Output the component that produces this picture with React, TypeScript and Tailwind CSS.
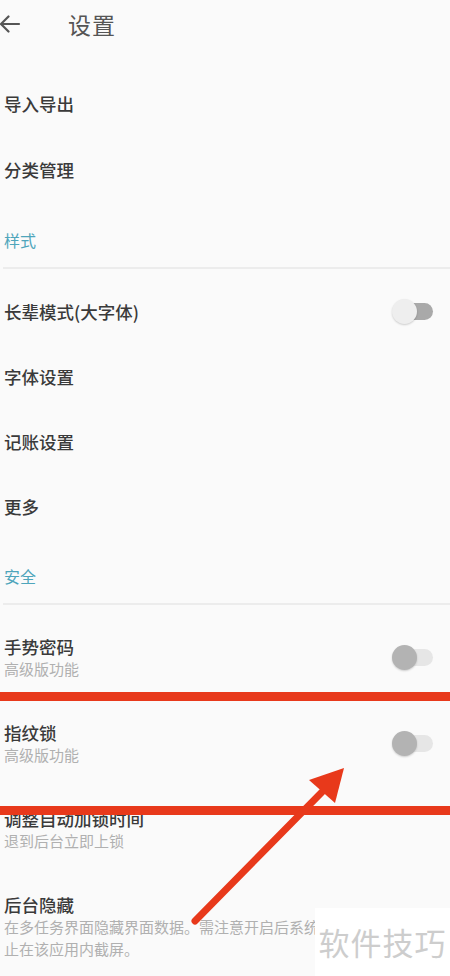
import type { ReactNode } from "react";

const font = { fontFamily: '"Noto Sans CJK SC", "Noto Sans", sans-serif' };

const Toggle = ({ on }: { on?: boolean }) => (
  <div className="relative w-[41px] h-[26px] shrink-0">
    <div
      className={`absolute left-[4px] right-0 top-[4px] h-[17px] rounded-full ${
        on ? "bg-[#a9a9a9]" : "bg-[#e6e6e6]"
      }`}
    />
    <div
      className={`absolute left-0 top-0 w-[25px] h-[25px] rounded-full shadow-[0_1px_2px_rgba(0,0,0,0.18)] ${
        on ? "bg-[#eeeeee]" : "bg-[#b3b3b3]"
      }`}
    />
  </div>
);

const Row = ({ title, toggle }: { title: string; toggle?: boolean }) => (
  <div className="h-[65px] flex items-center justify-between pl-[4px] pr-[17px]">
    <span className="text-[17.5px] leading-[22px] font-medium text-[#3a3a3a]">{title}</span>
    {toggle && <Toggle on />}
  </div>
);

const SubRow = ({
  title,
  sub,
  toggle,
}: {
  title: string;
  sub: ReactNode;
  toggle?: boolean;
}) => (
  <div className="flex items-center justify-between pl-[4px] pr-[17px] pt-[21px] pb-[21px]">
    <div className="flex flex-col w-[350px]">
      <span className="text-[17.5px] leading-[22px] font-medium text-[#3a3a3a]">{title}</span>
      <span className="text-[15px] leading-[22px] text-[#b0b0b0]">{sub}</span>
    </div>
    {toggle && <Toggle />}
  </div>
);

const Section = ({ label }: { label: string }) => (
  <div className="pl-[4px]">
    <div className="pt-[28px] text-[16px] leading-[18px] text-[#4ea5bb]">{label}</div>
    <div className="mt-[18px] mx-[-1px] h-[2px] bg-[#ececec]" />
  </div>
);

const App = () => {
  return (
    <div className="relative w-[450px] h-[976px] overflow-hidden bg-[#fafafa]" style={font}>
      {/* header */}
      <div className="h-[48px] flex items-center">
        <svg width="22" height="18" viewBox="0 0 22 18" className="ml-[-1px]">
          <path
            d="M20 9H2M9.5 1.5L2 9l7.5 7.5"
            fill="none"
            stroke="#555"
            strokeWidth="2.2"
            strokeLinecap="round"
            strokeLinejoin="round"
          />
        </svg>
        <span className="ml-[47px] text-[23px] leading-[28px] text-[#555] tracking-[1px]">设置</span>
      </div>

      <div className="pt-[23px]">
        <div className="h-[66px] flex items-center pl-[4px]">
          <span className="text-[17.5px] font-medium text-[#3a3a3a]">导入导出</span>
        </div>
        <div className="h-[66px] flex items-center pl-[4px]">
          <span className="text-[17.5px] font-medium text-[#3a3a3a]">分类管理</span>
        </div>
      </div>

      <Section label="样式" />
      <div className="pt-[10px]">
        <Row title="长辈模式(大字体)" toggle />
        <Row title="字体设置" />
        <Row title="记账设置" />
        <Row title="更多" />
      </div>

      <Section label="安全" />
      <div className="pt-[10px]">
        <SubRow title="手势密码" sub="高级版功能" toggle />
        <SubRow title="指纹锁" sub="高级版功能" toggle />
        <SubRow title="调整自动加锁时间" sub="退到后台立即上锁" />
        <SubRow
          title="后台隐藏"
          sub="在多任务界面隐藏界面数据。需注意开启后系统将禁止在该应用内截屏。"
        />
      </div>

      {/* red annotation lines */}
      <div className="absolute left-0 right-0 top-[692px] h-[9px] bg-[#e8391b]" />
      <div className="absolute left-0 right-0 top-[806px] h-[9px] bg-[#e8391b]" />

      {/* red arrow */}
      <svg className="absolute left-0 top-0" width="450" height="976" viewBox="0 0 450 976">
        <line x1="195" y1="921" x2="322" y2="792" stroke="#e8391b" strokeWidth="7" strokeLinecap="round" />
        <polygon points="344,768 309,780 335,803" fill="#e8391b" />
      </svg>

      {/* watermark, laid over the last row as in the screenshot */}
      <div className="absolute left-[315px] top-[908px] w-[135px] h-[68px] bg-white flex items-center justify-center">
        <span className="text-[31px] leading-[34px] text-[#cdcdcd] tracking-[1px]">软件技巧</span>
      </div>
    </div>
  );
};

export default App;
